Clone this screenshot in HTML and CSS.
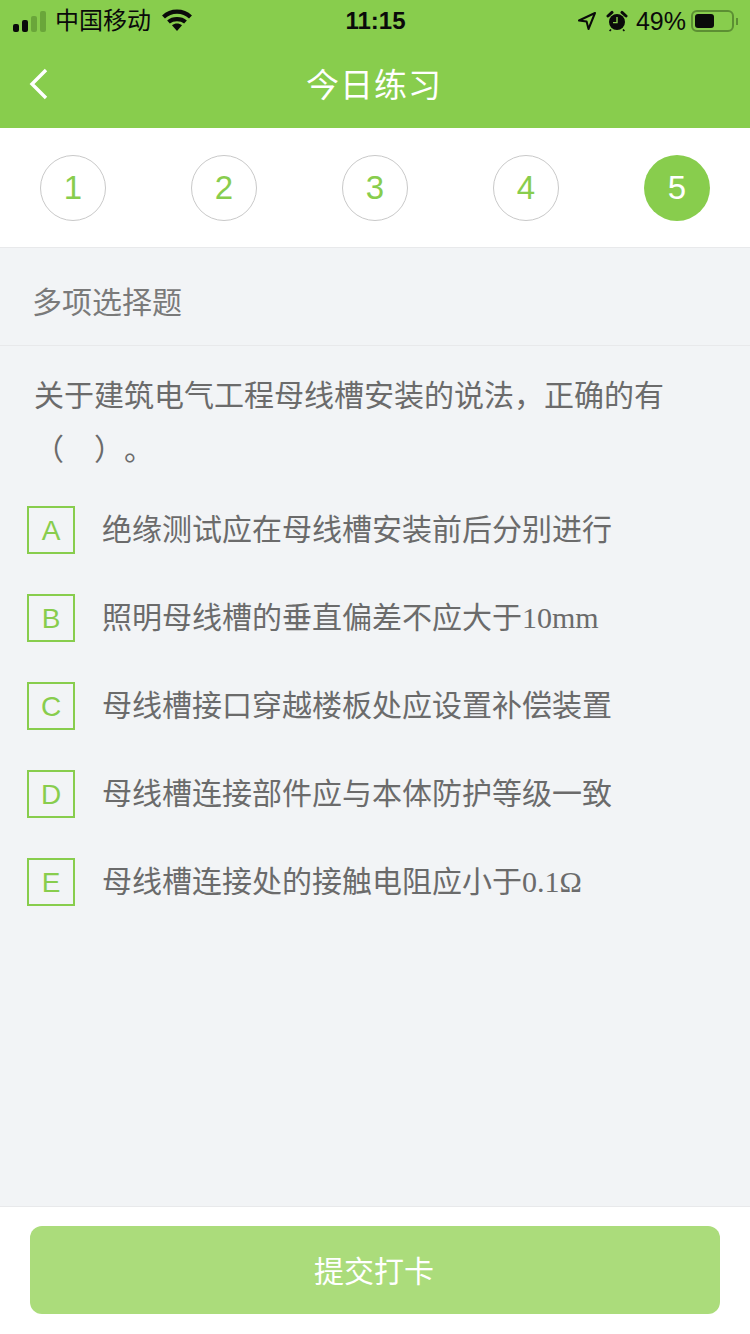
FILE: index.html
```html
<!DOCTYPE html>
<html lang="zh-CN">
<head>
    <meta charset="UTF-8">
    <meta name="viewport" content="width=device-width, initial-scale=1.0">
    <title>今日练习</title>
    <link rel="stylesheet" href="styles.css">
</head>
<body>
    <div class="app">
        <header class="top">
            <div class="status">
                <div class="status-left">
                    <span class="signal"><i class="on b1"></i><i class="on b2"></i><i class="b3"></i><i class="b4"></i></span>
                    <span class="carrier">中国移动</span>
                    <svg class="wifi" width="30" height="22" viewBox="0 0 30 22">
                        <path d="M1.5 8 C9 0.8 21 0.8 28.5 8" fill="none" stroke="#0a0a0a" stroke-width="4.2"/>
                        <path d="M6.5 13 C11 9.2 19 9.2 23.5 13" fill="none" stroke="#0a0a0a" stroke-width="4.2"/>
                        <path d="M10 16.2 C13 14 17 14 20 16.2 L15 22 Z" fill="#0a0a0a"/>
                    </svg>
                </div>
                <div class="clock">11:15</div>
                <div class="status-right">
                    <svg class="arrow" width="20" height="20" viewBox="0 0 20 20">
                        <path d="M18 2 L2 9.5 L9.6 10.6 L11.5 18 Z" fill="none" stroke="#0a0a0a" stroke-width="2" stroke-linejoin="round"/>
                    </svg>
                    <svg class="alarm" width="22" height="22" viewBox="0 0 22 22">
                        <circle cx="11" cy="12" r="8" fill="#0a0a0a"/>
                        <path d="M2 6 L6 2.4 M20 6 L16 2.4" stroke="#0a0a0a" stroke-width="3" stroke-linecap="round"/>
                        <path d="M5 19.5 L3.6 21 M17 19.5 L18.4 21" stroke="#0a0a0a" stroke-width="1.6"/>
                        <path d="M11 7 V12.6 H7" fill="none" stroke="#88cd4d" stroke-width="1.4"/>
                    </svg>
                    <span class="percent">49%</span>
                    <span class="battery"><i class="level"></i></span>
                    <span class="cap"></span>
                </div>
            </div>
            <div class="nav">
                <svg class="back" width="20" height="32" viewBox="0 0 20 32">
                    <path d="M17 2 L3 16 L17 30" fill="none" stroke="#fff" stroke-width="3.4"/>
                </svg>
                <h1 class="title">今日练习</h1>
            </div>
        </header>

        <div class="steps">
            <span class="step">1</span>
            <span class="step">2</span>
            <span class="step">3</span>
            <span class="step">4</span>
            <span class="step current">5</span>
        </div>

        <main class="content">
            <div class="kind">多项选择题</div>
            <p class="question">关于建筑电气工程母线槽安装的说法，正确的有（　）。</p>
            <ul class="options">
                <li class="option"><span class="letter">A</span><span class="text">绝缘测试应在母线槽安装前后分别进行</span></li>
                <li class="option"><span class="letter">B</span><span class="text">照明母线槽的垂直偏差不应大于<span class="num">10mm</span></span></li>
                <li class="option"><span class="letter">C</span><span class="text">母线槽接口穿越楼板处应设置补偿装置</span></li>
                <li class="option"><span class="letter">D</span><span class="text">母线槽连接部件应与本体防护等级一致</span></li>
                <li class="option"><span class="letter">E</span><span class="text">母线槽连接处的接触电阻应小于<span class="num">0.1Ω</span></span></li>
            </ul>
        </main>

        <footer class="bottom">
            <button class="submit">提交打卡</button>
        </footer>
    </div>
</body>
</html>
```

FILE: styles.css
```css
* {
    box-sizing: border-box;
}
html, body {
    margin: 0;
    padding: 0;
}
body {
    font-family: "Liberation Sans", "Noto Sans CJK SC", sans-serif;
    background-color: #f2f4f6;
}
.app {
    width: 750px;
    height: 1334px;
    display: flex;
    flex-direction: column;
    overflow: hidden;
}
.top {
    height: 128px;
    background-color: #88cd4d;
}
.status {
    height: 40px;
    padding: 2px 12px 0 13px;
    display: flex;
    align-items: center;
    justify-content: space-between;
    color: #0a0a0a;
}
.status-left, .status-right {
    width: 240px;
    display: flex;
    align-items: center;
}
.status-right {
    justify-content: flex-end;
}
.signal {
    display: flex;
    align-items: flex-end;
    gap: 3px;
    height: 21px;
}
.signal i {
    width: 6px;
    border-radius: 2px;
    background-color: #6aa63a;
}
.signal .on {
    background-color: #0a0a0a;
}
.b1 { height: 8px; }
.b2 { height: 12px; }
.b3 { height: 16px; }
.b4 { height: 21px; }
.carrier {
    margin-left: 9px;
    font-size: 24px;
    line-height: 30px;
}
.wifi {
    margin-left: 11px;
    margin-top: -3px;
}
.clock {
    font-size: 24px;
    font-weight: bold;
}
.arrow {
    margin-right: 9px;
}
.percent {
    margin-left: 8px;
    font-size: 25px;
}
.battery {
    margin-left: 5px;
    width: 43px;
    height: 22px;
    padding: 2px;
    border: 2px solid #5c8f33;
    border-radius: 6px;
}
.level {
    display: block;
    width: 19px;
    height: 100%;
    border-radius: 3px;
    background-color: #0a0a0a;
}
.cap {
    width: 2px;
    height: 7px;
    margin-left: 2px;
    background-color: #5c8f33;
}
.nav {
    position: relative;
    height: 88px;
    display: flex;
    align-items: center;
    justify-content: center;
}
.back {
    position: absolute;
    left: 29px;
    top: 28px;
}
.title {
    margin: 0 2px 2px 0;
    font-size: 33px;
    font-weight: normal;
    color: #fff;
    letter-spacing: 1px;
}
.steps {
    height: 120px;
    padding: 0 40px;
    display: flex;
    align-items: center;
    justify-content: space-between;
    background-color: #fff;
    border-bottom: 1px solid #e8e9eb;
}
.step {
    width: 66px;
    height: 66px;
    display: flex;
    align-items: center;
    justify-content: center;
    border: 1px solid #c9c9c9;
    border-radius: 50%;
    font-size: 33px;
    color: #88cd4d;
}
.step.current {
    border: none;
    background-color: #88cd4d;
    color: #fff;
}
.content {
    flex: 1;
}
.kind {
    height: 98px;
    padding: 6px 0 0 32px;
    display: flex;
    align-items: center;
    font-size: 30px;
    color: #7a7a7a;
    border-bottom: 1px solid #e8e9eb;
}
.question {
    margin: 23px 0 0;
    padding: 0 60px 0 34px;
    font-size: 30px;
    line-height: 54px;
    color: #6b6b6b;
    text-spacing-trim: space-all;
}
.options {
    list-style: none;
    margin: 29px 0 0;
    padding: 0 0 0 27px;
}
.option {
    height: 88px;
    display: flex;
    align-items: flex-start;
}
.letter {
    width: 48px;
    height: 48px;
    padding-top: 2px;
    display: flex;
    align-items: center;
    justify-content: center;
    border: 2px solid #88cd4d;
    font-size: 28px;
    color: #88cd4d;
}
.text {
    margin-left: 27px;
    font-size: 30px;
    line-height: 48px;
    color: #6b6b6b;
}
.num {
    font-family: "Liberation Serif", serif;
}
.bottom {
    height: 128px;
    padding: 19px 30px 0;
    background-color: #fff;
    border-top: 1px solid #e8e9eb;
}
.submit {
    display: block;
    width: 100%;
    height: 88px;
    padding: 0 2px 2px 0;
    border: none;
    border-radius: 12px;
    background-color: #abdc7b;
    color: #fff;
    font-family: inherit;
    font-size: 30px;
}
```
